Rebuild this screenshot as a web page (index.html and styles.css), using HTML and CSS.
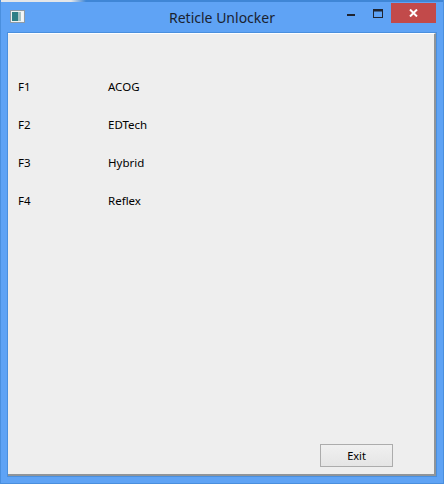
FILE: index.html
```html
<!DOCTYPE html>
<html lang="en">
<head>
    <meta charset="UTF-8">
    <meta name="viewport" content="width=device-width, initial-scale=1.0">
    <title>Reticle Unlocker</title>
    <link rel="stylesheet" href="styles.css">
</head>
<body>
    <div class="window">
        <div class="titlebar">
            <svg class="app-icon" width="15" height="13" viewBox="0 0 15 13">
                <rect x="0.5" y="0.5" width="14" height="12" fill="#eef2f2" stroke="#8d9aa6"/>
                <rect x="2" y="2" width="6" height="9" fill="#2f7f86"/>
                <rect x="8" y="2" width="3" height="9" fill="#a9c3c4"/>
                <rect x="11" y="2" width="2" height="9" fill="#f4f6f6"/>
            </svg>
            <div class="title">Reticle Unlocker</div>
            <div class="controls">
                <div class="control minimize">
                    <svg width="8" height="2" viewBox="0 0 8 2"><rect width="8" height="2" fill="#1f2430"/></svg>
                </div>
                <div class="control maximize">
                    <svg width="10" height="9" viewBox="0 0 10 9"><rect x="0.5" y="0.5" width="9" height="8" fill="none" stroke="#1f2430"/><rect width="10" height="2.5" fill="#1f2430"/></svg>
                </div>
                <div class="close">
                    <svg width="9" height="8" viewBox="0 0 9 8"><path d="M1 0.5l7 7M8 0.5l-7 7" stroke="#fff" stroke-width="2"/></svg>
                </div>
            </div>
        </div>
        <div class="content">
            <div class="keys">
                <span>F1</span><span>ACOG</span>
                <span>F2</span><span>EDTech</span>
                <span>F3</span><span>Hybrid</span>
                <span>F4</span><span>Reflex</span>
            </div>
            <div class="actions">
                <button type="button">Exit</button>
            </div>
        </div>
    </div>
</body>
</html>
```

FILE: styles.css
```css
html,
body {
    margin: 0;
    padding: 0;
    height: 100%;
}

body {
    font-family: "Noto Sans", Tahoma, sans-serif;
    font-size: 11.5px;
    color: #000;
    background-color: #5fa3f5;
}

.window {
    box-sizing: border-box;
    height: 484px;
    width: 444px;
    padding: 0 7px 7px 7px;
    display: flex;
    flex-direction: column;
    border: 1px solid #4a8fde;
    border-top: none;
    background: linear-gradient(to right, #e4e6e8 70px, #3f86d6 85px) top / 100% 2px no-repeat, #5fa3f5;
}

.titlebar {
    height: 33px;
    display: grid;
    grid-template-columns: 1fr auto 1fr;
    align-items: start;
    flex-shrink: 0;
}

.app-icon {
    margin: 10px 0 0 2px;
}

.title {
    font-size: 14px;
    line-height: 20px;
    margin-top: 8px;
    color: #1a2230;
}

.controls {
    display: flex;
    justify-content: flex-end;
    margin-top: 3px;
}

.control {
    box-sizing: border-box;
    width: 29px;
    height: 20px;
    display: flex;
    align-items: center;
    justify-content: center;
}

.minimize {
    padding: 3px 0 0 7px;
}

.maximize {
    padding-left: 3px;
}

.close {
    width: 45px;
    height: 20px;
    background-color: #c24a4a;
    display: flex;
    align-items: center;
    justify-content: center;
}

.content {
    flex: 1;
    background-color: #eeeeee;
    border-top: 1px solid #fff;
    border-bottom: 2px solid #8f9499;
    border-right: 2px solid #8f9499;
    box-shadow: 0 0 0 1px #4a8fde;
    padding: 33px 41px 7px 10px;
    display: flex;
    flex-direction: column;
    justify-content: space-between;
}

.keys {
    display: grid;
    grid-template-columns: 90px 1fr;
    grid-auto-rows: 38px;
    align-items: center;
}

.actions {
    display: flex;
    justify-content: flex-end;
}

button {
    width: 73px;
    height: 23px;
    font-family: inherit;
    font-size: 11px;
    background: linear-gradient(#f0f0f0, #e5e5e5);
    border: 1px solid #acacac;
    padding: 0;
}
```
